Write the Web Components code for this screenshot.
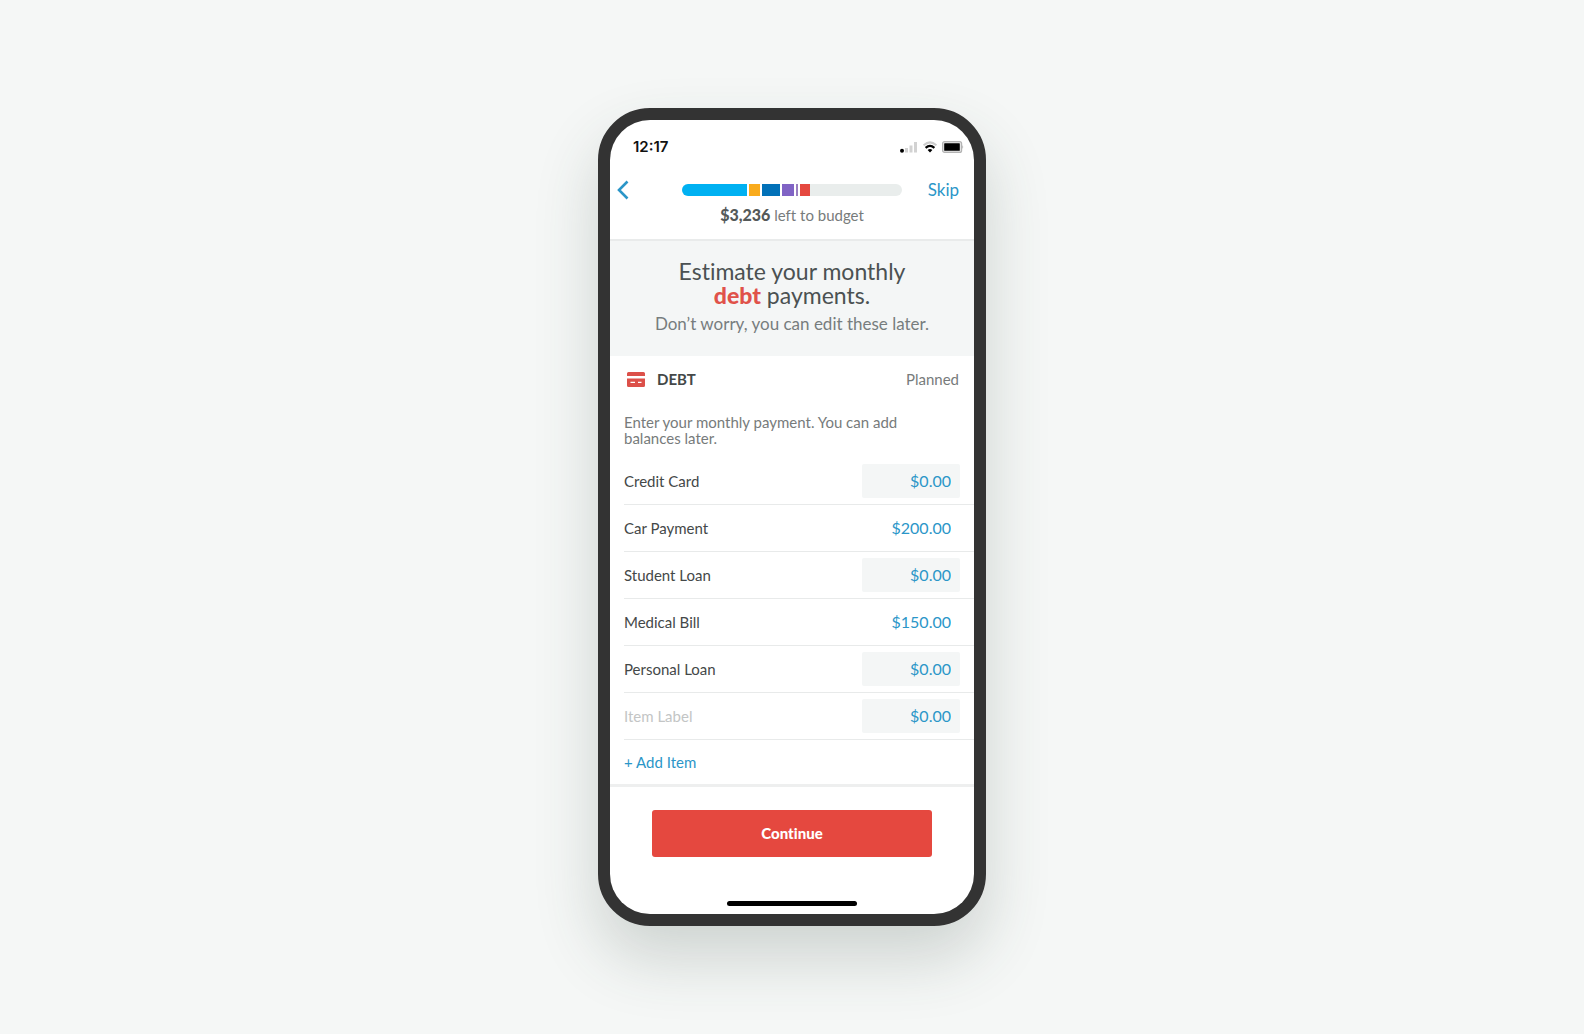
<!DOCTYPE html>
<html lang="en">
<head>
<meta charset="UTF-8">
<meta name="viewport" content="width=device-width, initial-scale=1">
<title>Debt payments</title>
<style>
  body {
    margin: 0;
    min-height: 100vh;
    display: grid;
    align-items: center;
    justify-items: center;
    background: #f5f7f6;
    color: #444848;
    font-family: Lato, "Liberation Sans", sans-serif;
    font-size: 15px;
    font-variant-ligatures: none;
    line-height: 20px;
  }
</style>
</head>
<body>
  <phone-frame>
    <status-bar time="12:17"></status-bar>
    <budget-header>
      <budget-progress slot="progress" label="Budget used"></budget-progress>
      <strong>$3,236</strong> left to budget
    </budget-header>
    <page-intro>
      Estimate your monthly <strong>debt</strong> payments.
      <span slot="note">Don’t worry, you can edit these later.</span>
    </page-intro>
    <budget-group name="DEBT" column="Planned">
      <span slot="hint">Enter your monthly payment. You can add balances later.</span>
      <budget-item name="Credit Card" amount="$0.00"></budget-item>
      <budget-item name="Car Payment" amount="$200.00" filled></budget-item>
      <budget-item name="Student Loan" amount="$0.00"></budget-item>
      <budget-item name="Medical Bill" amount="$150.00" filled></budget-item>
      <budget-item name="Personal Loan" amount="$0.00"></budget-item>
      <budget-item amount="$0.00"></budget-item>
    </budget-group>
    <action-footer>Continue</action-footer>
  </phone-frame>

<script>
// Shared base: puts the template of the subclass in an open shadow root
class BaseElement extends HTMLElement {
  connectedCallback() {
    if (this.shadowRoot) return;
    this.attachShadow({ mode: 'open' });
    this.shadowRoot.innerHTML = this.getTemplate();
    this.addEventListeners();
  }

  addEventListeners() {}
}

class PhoneFrame extends BaseElement {
  getTemplate() {
    return `
      <style>
        :host {
          display: block;
          box-sizing: border-box;
          width: 100%;
          max-width: 388px;
          border: 12px solid #333;
          border-radius: 52px;
          background: #333;
          box-shadow: 0 32px 64px rgba(50, 70, 60, 0.2);
        }
        .screen {
          border-radius: 40px;
          background: #fff;
          overflow: hidden;
        }
      </style>
      <main class="screen"><slot></slot></main>
    `;
  }
}

class StatusBar extends BaseElement {
  getTemplate() {
    return `
      <style>
        :host {
          display: flex;
          align-items: center;
          justify-content: space-between;
          height: 54px;
          padding: 0 10px 0 23px;
          color: #111;
          font: 600 15px/20px Inter, "Liberation Sans", sans-serif;
        }
        .icons {
          display: flex;
          align-items: center;
          gap: 5px;
        }
        svg { display: block; }
      </style>
      <span>${this.getAttribute('time')}</span>
      <div class="icons">
        <svg width="18" height="12" viewBox="0 0 18 12" aria-hidden="true">
          <circle cx="2" cy="9.800" r="2" fill="#000"/>
          <path d="M5 7h3v4.500H5zM9.500 4.500h3v7h-3zM14 1h3v10.500h-3z" fill="#d2d2d2"/>
        </svg>
        <svg width="14" height="12" viewBox="0 0 14 12" fill="none" aria-hidden="true">
          <path d="M.6 4.300Q7-1.600 13.400 4.300" stroke="#ccc" stroke-width="2"/>
          <path d="M2.600 6.800Q7 3 11.400 6.800" stroke="#000" stroke-width="2.200"/>
          <path d="M7 11.500L4.600 9Q7 7.200 9.400 9z" fill="#000"/>
        </svg>
        <svg width="22" height="12" viewBox="0 0 22 12" aria-hidden="true">
          <rect x=".6" y=".6" width="19" height="10.800" rx="2" fill="#e4e4e4" stroke="#b4b4b4" stroke-width="1.200"/>
          <rect x="2.200" y="2.200" width="15.600" height="7.600" rx=".6" fill="#000"/>
          <path d="M20.500 4q1.400 2 0 4z" fill="#999"/>
        </svg>
      </div>
    `;
  }
}

class BudgetProgress extends BaseElement {
  getTemplate() {
    // color and share of each budget group that is already planned
    const segments = [
      ['#00b1f2', 65],
      ['#f9ab1d', 11],
      ['#0271b8', 18],
      ['#8063c5', 12],
      ['#9a7fc0', 2],
      ['#e5483f', 10]
    ];
    const bars = segments
      .map(([color, share]) => `<i style="background:${color};flex-grow:${share}"></i>`)
      .join('');

    return `
      <style>
        :host {
          display: block;
          border-radius: 6px;
          background: #e9edec;
          overflow: hidden;
        }
        .filled {
          display: flex;
          gap: 2px;
          width: 58%;
          height: 12px;
          background: #fff;
        }
        i { flex-basis: 0; }
      </style>
      <div class="filled" role="img" aria-label="${this.getAttribute('label')}">${bars}</div>
    `;
  }
}

class BudgetHeader extends BaseElement {
  getTemplate() {
    return `
      <style>
        :host {
          display: block;
          padding: 4px 0 14px;
          border-bottom: 2px solid #e9ebeb;
          color: #777b7b;
          text-align: center;
        }
        nav {
          display: grid;
          grid-template-columns: 72px 1fr 72px;
          align-items: center;
          height: 24px;
          margin-bottom: 3px;
        }
        button {
          justify-self: start;
          padding: 0 7px;
          border: 0;
          background: none;
          cursor: pointer;
        }
        svg { display: block; }
        a {
          justify-self: end;
          padding-right: 15px;
          color: #2b96c8;
          font-size: 17px;
          text-decoration: none;
        }
        p {
          height: 20px;
          margin: 0;
        }
        ::slotted(strong) {
          color: #555959;
          font-size: 16px;
          font-weight: 900;
        }
      </style>
      <nav>
        <button type="button" aria-label="Back">
          <svg width="12" height="20" viewBox="0 0 12 20" fill="none" stroke="#2b96c8" stroke-width="2.600">
            <path d="M10.500 1.500L2 10l8.500 8.500"/>
          </svg>
        </button>
        <slot name="progress"></slot>
        <a href="#skip">Skip</a>
      </nav>
      <p><slot></slot></p>
    `;
  }
}

class PageIntro extends BaseElement {
  getTemplate() {
    return `
      <style>
        :host {
          display: block;
          padding: 18px 40px 22px;
          background: #f4f6f6;
          text-align: center;
        }
        h1 {
          max-width: 240px;
          margin: 0 auto 7px;
          color: #4b5152;
          font-size: 23px;
          font-weight: 400;
          line-height: 24px;
        }
        p {
          margin: 0;
          color: #777d7e;
          font-size: 17px;
        }
        ::slotted(strong) {
          color: #e0524a;
          font-weight: 900;
        }
      </style>
      <h1><slot></slot></h1>
      <p><slot name="note"></slot></p>
    `;
  }
}

class BudgetItem extends BaseElement {
  getTemplate() {
    const name = this.getAttribute('name');
    const amount = this.getAttribute('amount');
    const label = name
      ? `<label for="amount">${name}</label>`
      : `<input class="name" type="text" placeholder="Item Label" aria-label="Item label">`;

    return `
      <style>
        :host {
          display: flex;
          align-items: center;
          justify-content: space-between;
          box-sizing: border-box;
          height: 47px;
          padding-right: 14px;
          border-bottom: 1px solid #e8eaea;
        }
        input {
          box-sizing: border-box;
          height: 34px;
          border: 0;
          border-radius: 2px;
          background: none;
          font: inherit;
        }
        .name {
          width: 160px;
          padding: 0;
        }
        .name::placeholder {
          color: #c3c5c5;
          opacity: 1;
        }
        .amount {
          width: 98px;
          padding: 0 9px 2px;
          background: #f4f6f6;
          color: #2b96c8;
          font-size: 16px;
          text-align: right;
        }
        :host([filled]) .amount { background: none; }
      </style>
      ${label}
      <input class="amount" id="amount" type="text" inputmode="decimal" value="${amount}"${name ? '' : ' aria-label="Planned amount"'}>
    `;
  }
}

class BudgetGroup extends BaseElement {
  getTemplate() {
    return `
      <style>
        :host {
          display: block;
          padding-left: 14px;
        }
        header {
          display: flex;
          align-items: center;
          gap: 12px;
          height: 46px;
          padding: 0 15px 0 3px;
        }
        h2 {
          flex: 1;
          margin: 0;
          font-size: 15px;
          font-weight: 700;
        }
        header span { color: #777b7b; }
        p {
          margin: 0;
          padding: 12px 60px 12px 0;
          color: #777b7b;
          line-height: 16px;
        }
        button {
          display: block;
          height: 44px;
          padding: 0;
          border: 0;
          background: none;
          color: #2b96c8;
          font: inherit;
          cursor: pointer;
        }
      </style>
      <header>
        <svg width="18" height="16" viewBox="0 0 18 16" aria-hidden="true">
          <path d="M1.500 1h15Q18 1 18 2.500V5H0V2.500Q0 1 1.500 1zM0 7.500h18v7q0 1.500-1.500 1.500h-15Q0 16 0 14.500z" fill="#dc5049"/>
          <path d="M3.500 11.300h4.500M11 11.300h3.500" stroke="#fff" stroke-width="1.300"/>
        </svg>
        <h2>${this.getAttribute('name')}</h2>
        <span>${this.getAttribute('column')}</span>
      </header>
      <p><slot name="hint"></slot></p>
      <slot></slot>
      <button type="button">+ Add Item</button>
    `;
  }

  addEventListeners() {
    // New empty row above the add button
    this.shadowRoot.querySelector('button').addEventListener('click', () => {
      const item = document.createElement('budget-item');
      item.setAttribute('amount', '$0.00');
      this.appendChild(item);
    });
  }
}

class ActionFooter extends BaseElement {
  getTemplate() {
    return `
      <style>
        :host {
          display: block;
          padding: 23px 42px 8px;
          border-top: 3px solid #eeefef;
        }
        button {
          display: block;
          width: 100%;
          height: 47px;
          padding: 0 0 2px;
          border: 0;
          border-radius: 3px;
          background: #e5483f;
          color: #fff;
          font: inherit;
          font-weight: 900;
          cursor: pointer;
        }
        .home {
          width: 130px;
          height: 5px;
          margin: 44px auto 0;
          border-radius: 3px;
          background: #000;
        }
      </style>
      <button type="button"><slot></slot></button>
      <div class="home"></div>
    `;
  }
}

customElements.define('phone-frame', PhoneFrame);
customElements.define('status-bar', StatusBar);
customElements.define('budget-progress', BudgetProgress);
customElements.define('budget-header', BudgetHeader);
customElements.define('page-intro', PageIntro);
customElements.define('budget-item', BudgetItem);
customElements.define('budget-group', BudgetGroup);
customElements.define('action-footer', ActionFooter);
</script>
</body>
</html>
